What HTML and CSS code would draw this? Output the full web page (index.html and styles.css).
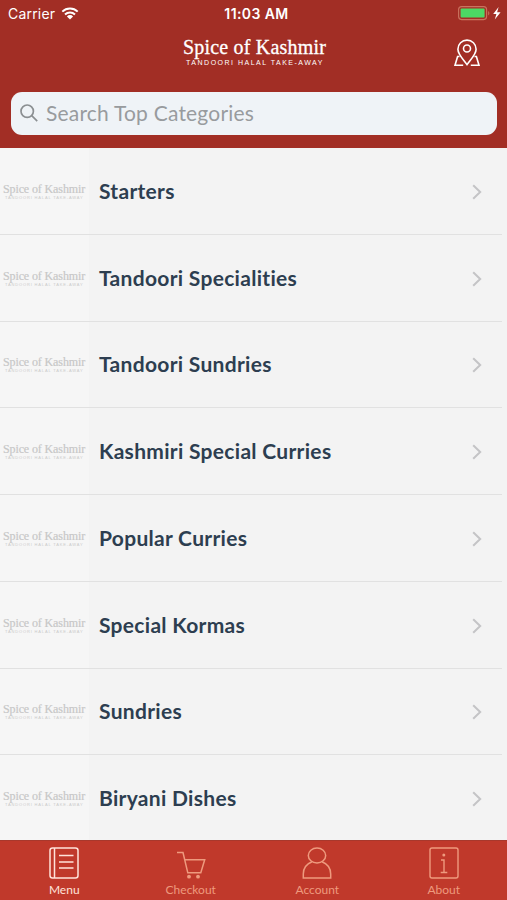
FILE: index.html
```
<!DOCTYPE html>
<html lang="en">
<head>
    <meta charset="UTF-8">
    <meta name="viewport" content="width=device-width, initial-scale=1.0">
    <title>Spice of Kashmir</title>
    <link rel="stylesheet" href="styles.css">
</head>
<body>
    <header class="header">
        <div class="status">
            <div class="carrier">
                <span>Carrier</span>
                <svg class="wifi" viewBox="0 0 18 13" width="18" height="13">
                    <path d="M1.3 4.6a11 11 0 0 1 15.4 0M4 7.5a7.2 7.2 0 0 1 10 0" fill="none" stroke="#fff" stroke-width="2"/>
                    <path d="M5.9 9.4a4.4 4.4 0 0 1 6.2 0L9 12.5z" fill="#fff"/>
                </svg>
            </div>
            <span class="time">11:03 AM</span>
            <svg class="battery" viewBox="0 0 44 15" width="44" height="15">
                <rect x=".6" y=".6" width="28" height="13" rx="3" fill="none" stroke="#c9735f" stroke-width="1.1"/>
                <rect x="2.6" y="2.6" width="24" height="9" rx="1" fill="#4cd964"/>
                <path d="M30.2 5v4.4c1.600-.8 1.600-3.600 0-4.400z" fill="#c9735f"/>
                <path d="M40.600 1 35.200 8h3.200l-1.600 5.500 5.800-7.300h-3.500z" fill="#fff"/>
            </svg>
        </div>
        <div class="navbar">
            <div class="logo">
                <span class="logo-name">Spice of Kashmir</span>
                <span class="logo-sub">TANDOORI HALAL TAKE-AWAY</span>
            </div>
            <svg class="pin" viewBox="0 0 26 28" width="26" height="28" fill="none" stroke="#fff" stroke-width="1.600">
                <path d="M13 25.600C9.500 20.500 3.900 15.500 3.900 10.200a9.100 9.100 0 0 1 18.200 0C22.100 15.500 16.500 20.500 13 25.600z"/>
                <circle cx="13" cy="9.500" r="3.500"/>
                <path d="M5.500 17.500H3.600L1 26.300h8.200M20.500 17.500h1.900L25 26.300h-8.200"/>
            </svg>
        </div>
        <div class="search">
            <svg viewBox="0 0 18 18" width="18" height="18" fill="none" stroke="#8b8f92" stroke-width="1.700">
                <circle cx="7.200" cy="7.200" r="6.200"/>
                <path d="M11.700 11.700 17.200 17.200"/>
            </svg>
            <span class="placeholder">Search Top Categories</span>
        </div>
    </header>

    <main class="list" id="list"></main>

    <nav class="tabs">
        <div class="tab active">
            <svg viewBox="0 0 32 34" width="32" height="34" fill="none" stroke="currentColor" stroke-width="1.500">
                <rect x="2" y="2" width="28" height="30" rx="2.500"/>
                <path d="M6.500 2v30M11 9.500h14.500M11 16h14.500M11 22h14.500"/>
            </svg>
            <span>Menu</span>
        </div>
        <div class="tab">
            <svg viewBox="0 0 32 34" width="32" height="34" fill="none" stroke="currentColor" stroke-width="1.500">
                <path d="M2 6.500h6l4.800 20.300h13L29.700 13.800H9.700"/>
                <circle cx="14" cy="30.700" r="1.900" fill="currentColor" stroke="none"/>
                <circle cx="23" cy="30.700" r="1.900" fill="currentColor" stroke="none"/>
            </svg>
            <span>Checkout</span>
        </div>
        <div class="tab">
            <svg viewBox="0 0 32 34" width="32" height="34" fill="none" stroke="currentColor" stroke-width="1.500">
                <ellipse cx="16" cy="9.500" rx="8.700" ry="7.500"/>
                <path d="M11 15.700C5.700 17.800 2.300 22.500 2.300 28v4h27.400v-4c0-5.500-3.400-10.200-8.700-12.300"/>
            </svg>
            <span>Account</span>
        </div>
        <div class="tab">
            <svg viewBox="0 0 32 34" width="32" height="34" fill="none" stroke="currentColor" stroke-width="1.400">
                <rect x="2" y="2" width="28" height="30" rx="2"/>
                <path d="M13 14h3v12.500M12.700 26.500h6.600"/>
                <circle cx="15.800" cy="9" r="1.500" fill="currentColor" stroke="none"/>
            </svg>
            <span>About</span>
        </div>
    </nav>

    <script>
        const list = document.getElementById("list");
        const categorias = [
            "Starters",
            "Tandoori Specialities",
            "Tandoori Sundries",
            "Kashmiri Special Curries",
            "Popular Curries",
            "Special Kormas",
            "Sundries",
            "Biryani Dishes",
        ];

        categorias.forEach((nombre) => {
            const row = document.createElement("div");
            row.classList.add("row");
            row.innerHTML = `
                <div class="thumb">
                    <span class="thumb-name">Spice of Kashmir</span>
                    <span class="thumb-sub">TANDOORI HALAL TAKE-AWAY</span>
                </div>
                <div class="row-body">
                    <span class="row-title">${nombre}</span>
                    <svg class="chevron" viewBox="0 0 10 16" width="10" height="16"><path d="M1.200 1.200 8.200 8l-7 6.800" fill="none" stroke="#c4c4c6" stroke-width="2"/></svg>
                </div>`;
            list.appendChild(row);
        });
    </script>
</body>
</html>
```
FILE: styles.css
```
* {
    margin: 0;
    padding: 0;
    box-sizing: border-box;
}

body {
    background: #f3f3f3;
    width: 100vw;
    height: 100vh;
    overflow: hidden;
    display: flex;
    flex-direction: column;
    font-family: Lato, sans-serif;
    font-variant-ligatures: none;
    white-space: nowrap;
}

svg {
    display: block;
    flex-shrink: 0;
}

.header {
    background: #a22e25;
    color: #fff;
    height: 148px;
    flex-shrink: 0;
    padding-bottom: 13px;
    display: flex;
    flex-direction: column;
}

.status {
    height: 27px;
    padding: 0 5px 0 8px;
    display: grid;
    grid-template-columns: 1fr auto 1fr;
    align-items: center;
    font-family: Inter, sans-serif;
    font-size: 14px;
}

.carrier {
    display: flex;
    align-items: center;
    gap: 7px;
    letter-spacing: 0.2px;
}

.wifi { margin-left: -1px; }

.time {
    padding-left: 3px;
    font-weight: 600;
    letter-spacing: 0.4px;
}

.battery { justify-self: end; }

.navbar {
    height: 65px;
    padding: 0 27px 14px;
    display: grid;
    grid-template-columns: 1fr auto 1fr;
    align-items: center;
}

.logo {
    grid-column: 2;
    display: flex;
    flex-direction: column;
    align-items: center;
    padding-left: 2px;
}

.logo-name {
    font-family: "Liberation Serif", serif;
    font-size: 20px;
    line-height: 21px;
    letter-spacing: 0.2px;
    -webkit-text-stroke: 0.3px #fff;
}

.logo-sub {
    font-family: "Liberation Sans", sans-serif;
    font-size: 7px;
    line-height: 10px;
    letter-spacing: 1.5px;
    padding-left: 1px;
}

.pin { justify-self: end; }

.search {
    height: 43px;
    margin: 0 10px 0 11px;
    padding: 0 9px;
    border-radius: 11px;
    background: #eff3f7;
    color: #989b9e;
    display: flex;
    align-items: center;
    gap: 8px;
    font-size: 21px;
    letter-spacing: 0.2px;
}

.search svg { margin-bottom: 1px; }

.placeholder { padding-bottom: 3px; }

.list {
    flex: 1;
    min-height: 0;
    overflow: hidden;
}

.row {
    height: 86.75px;
    display: flex;
    border-bottom: 1px solid;
    border-image: linear-gradient(to right, #e1e1e1 501px, transparent 501px) 1;
}

.thumb {
    width: 89px;
    padding: 2px 0 0 3px;
    display: flex;
    flex-direction: column;
    justify-content: center;
    color: #c6c6c6;
    background: rgba(255, 255, 255, 0.3);
}

.thumb-name {
    font-family: "Liberation Serif", serif;
    font-size: 12px;
    line-height: 12px;
    letter-spacing: -0.12px;
    -webkit-text-stroke: 0.2px #c9c9c9;
}

.thumb-sub {
    font-family: "Liberation Sans", sans-serif;
    font-size: 4px;
    line-height: 6px;
    padding-left: 2px;
    letter-spacing: 0.85px;
    color: #cbcbcb;
}

.row-body {
    flex: 1;
    padding: 0 25px 0 10px;
    display: flex;
    align-items: center;
    justify-content: space-between;
}

.row-title {
    color: #2d3e50;
    font-size: 21px;
    font-weight: 700;
    letter-spacing: 0.3px;
    padding-bottom: 1px;
}

.chevron { margin-top: 2px; }

.tabs {
    height: 60px;
    flex-shrink: 0;
    background: #c0392b;
    border-top: 1px solid #a8382c;
    display: grid;
    grid-template-columns: repeat(4, 1fr);
    padding: 5px 0 0 1px;
}

.tab {
    display: flex;
    flex-direction: column;
    align-items: center;
    color: #ee9a7e;
    font-size: 12px;
    line-height: 19px;
}

.tab.active { color: #ffe3da; }
```
